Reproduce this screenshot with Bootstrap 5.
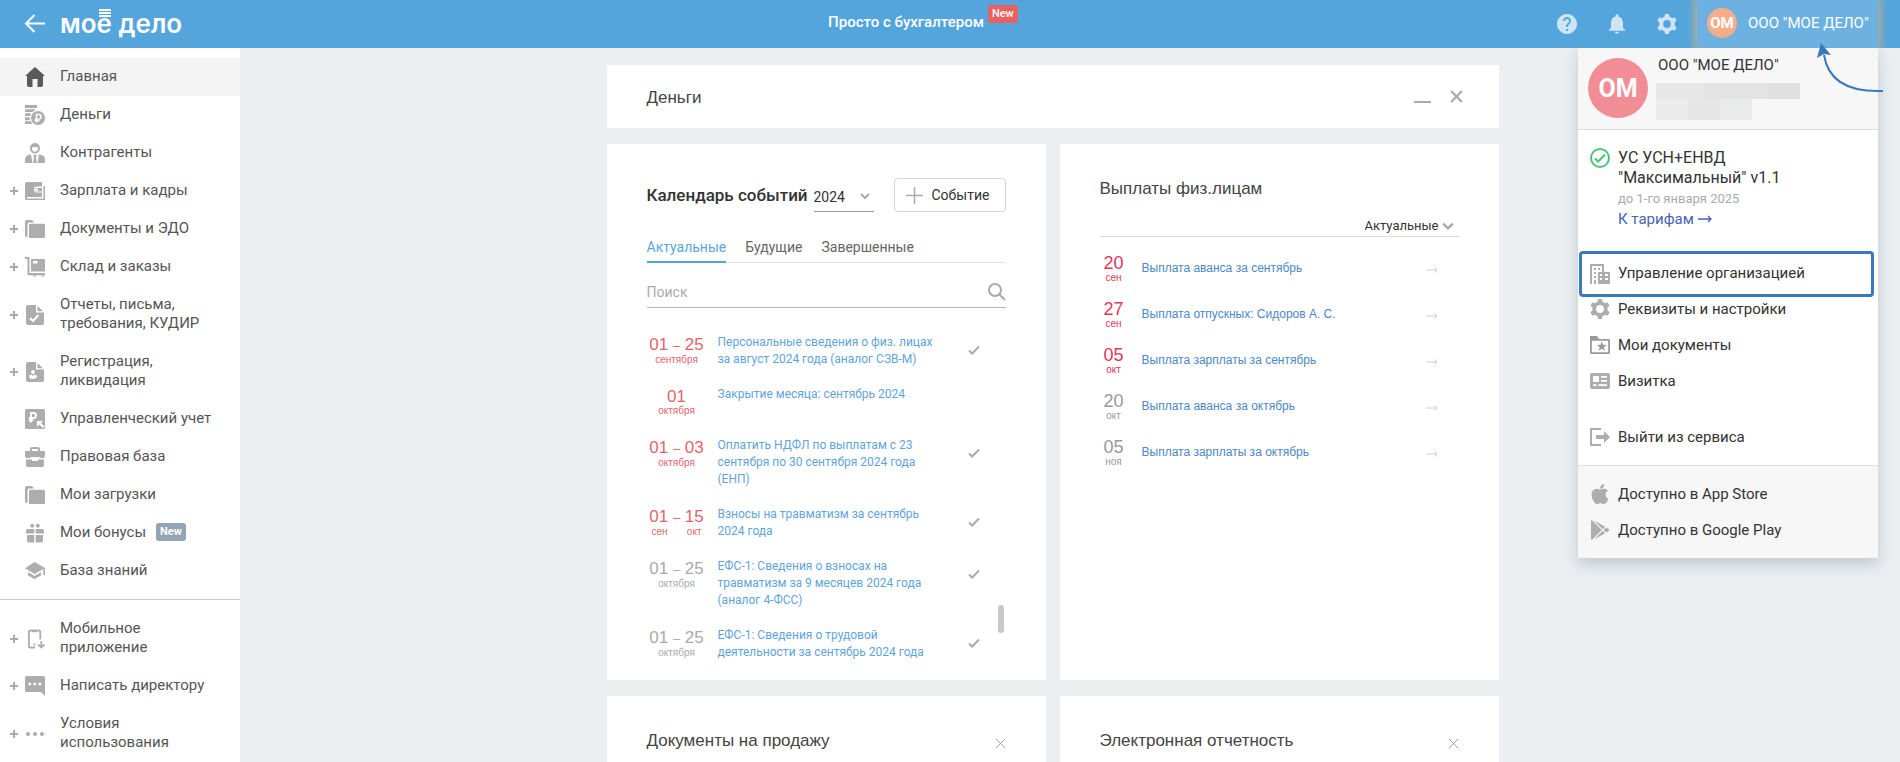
<!DOCTYPE html>
<html lang="ru">
<head>
<meta charset="utf-8">
<meta name="viewport" content="width=device-width, initial-scale=1">
<title>Моё дело — Главная</title>
<link href="https://cdn.jsdelivr.net/npm/bootstrap@5.3.0/dist/css/bootstrap.min.css" rel="stylesheet">
<style>
  body { font-family: Roboto, "Liberation Sans", sans-serif; font-size: 15px; line-height: 19px; color: #333; background: #ebeff2; }
  a { text-decoration: none; }
  svg { display: block; flex: none; }
  .ico { width: 20px; height: 20px; fill: #adadad; }

  /* top bar */
  .topbar { height: 48px; background: #53a5dc; color: #fff; padding: 0 22px 0 24px; z-index: 5; }
  .bar-side { flex: 1 1 0; display: flex; align-items: center; }
  .brand { font: 600 26px/46px Inter, sans-serif; color: #fff; margin-left: 14px; }
  .brand-yo { position: relative; display: inline-block; line-height: 30px; }
  .brand-yo::before { content: ""; position: absolute; left: 2px; top: 0; width: 12px; height: 8px;
    background: repeating-linear-gradient(#fff 0 2px, transparent 2px 3px); }
  .promo { color: #fff; font-weight: 500; font-size: 15px; margin-right: 90px; }
  .promo .tag-new { position: absolute; left: 100%; top: -8px; margin-left: 4px; }
  .tag-new { font-size: 11px; line-height: 18px; font-weight: 500; color: #fff; background: #e8605f; border-radius: 3px; padding: 0 4px; height: 18px; }
  .tag-side { background: #93a4b5; margin-left: 10px; font-weight: 700; }
  .topbar .ico { fill: #cfe5f5; }
  .icon-btn { border: 0; background: none; padding: 0; }
  .user-wrap { height: 48px; overflow: hidden; padding: 0 12px; margin-right: -12px; }
  .user-btn { height: 48px; width: 181px; border: 0; background: #6cb1e0; color: #fff; padding: 0 0 2px 10px; gap: 11px; box-shadow: 0 0 9px 1px #e0b070; white-space: nowrap; }
  .ava { border-radius: 50%; color: #fff; font-weight: 700; flex: none; display: flex; align-items: center; justify-content: center; }
  .ava-s { width: 30px; height: 30px; background: #f3ae89; font-size: 15px; }
  .ava-l { width: 60px; height: 60px; background: #f18e95; font-size: 25px; }

  /* sidebar */
  .side { width: 240px; flex: none; background: #fff; padding-top: 10px; }
  .side a { display: flex; align-items: center; min-height: 38px; padding: 0 10px 2px; color: #555; }
  .side a.two { min-height: 57px; }
  .side a.on { background: #f4f4f4; }
  .side a.on .ico { fill: #5a5a5a; }
  .side .ico { margin-right: 15px; }
  .side .ico, .side .plus { margin-top: 2px; }
  .plus { flex: none; width: 8px; height: 8px; margin-right: 7px; background: linear-gradient(#aaa, #aaa) center/8px 2px no-repeat, linear-gradient(#aaa, #aaa) center/2px 8px no-repeat; }
  .plus.none { background: none; }
  .side hr { margin: 9px 0 10px; border: 0; height: 1px; background: #ccc; opacity: 1; }

  /* widgets */
  .board { padding: 17px 35px 0 0; }
  .board-in { max-width: 892px; margin: 0 auto; display: grid; grid-template-columns: 1fr 1fr; gap: 16px 14px; }
  .widget { background: #fff; padding: 0 40px; }
  .widget h2 { font: 400 17px/22px "Liberation Sans", sans-serif; color: #444; margin: 0; }
  .money { grid-column: 1 / -1; height: 63px; padding-right: 36px; }
  .money h2 { padding-top: 2px; }
  .calendar, .payouts { height: 536px; }
  .teaser { min-height: 300px; padding-top: 34px; }
  .calendar h2 { font: 500 17px/22px Roboto, sans-serif; color: #333; padding-top: 6px; }
  .cal-head { padding-top: 34px; height: 68px; }
  .pick { appearance: none; border: 0; border-radius: 0; color: #333; background: transparent no-repeat right 4px center/10px 10px
    url("data:image/svg+xml,%3Csvg xmlns='http://www.w3.org/2000/svg' viewBox='0 0 10 10'%3E%3Cpath d='M1 3l4 4 4-4' fill='none' stroke='%23aaa' stroke-width='2'/%3E%3C/svg%3E"); }
  .pick-year { width: 60px; height: 32px; margin-top: 2px; border-bottom: 1px solid #999; font-size: 14px; padding: 3px 0 0; }
  .pick-state { width: 96px; height: 25px; font-size: 13px; padding: 2px 0 0 2px; background-size: 12px 12px; background-position: right 5px top 8px; }
  .btn-event { width: 112px; height: 34px; border: 1px solid #d5d5d5; border-radius: 4px; background: #fff; font-size: 14px; color: #333; gap: 9px; padding: 0 0 0 11px; }
  .tabs { margin-top: 25px; height: 26px; border-bottom: 1px solid #e3e3e3; gap: 19px; }
  .tabs button { border: 0; background: none; padding: 0 0 6px; font-size: 14px; line-height: 20px; height: 26px; color: #666; }
  .tabs button.on { color: #5aa6dc; border-bottom: 2px solid #53a5dc; padding-bottom: 4px; }
  .find { margin-top: 14px; height: 31px; border-bottom: 1px solid #b5b5b5; }
  .find input { border: 0; outline: 0; font-size: 14px; padding: 0; min-width: 0; color: #333; background: none; }
  .find input::placeholder { color: #aaa; opacity: 1; }
  .events { margin-top: 26px; position: relative; padding: 0; list-style: none; }
  .events li { display: flex; font-size: 12px; line-height: 17px; margin-bottom: 18px; }
  .events .when { width: 60px; margin-right: 11px; text-align: center; font-family: "Liberation Sans", sans-serif; color: #e8636a; min-height: 33px; padding-top: 1px; }
  .events .when b { display: block; font-weight: 400; font-size: 17px; line-height: 19px; }
  .events .when i { font-style: normal; font-size: 13px; }
  .events .when span { display: block; font-size: 10px; line-height: 10px; }
  .events .when span.pair { display: flex; justify-content: space-between; padding: 0 5px; }
  .events .later .when, .pays .later .when { color: #aaa; }
  .events a { color: #5fa4db; width: 226px; }
  .events .done { border: 0; background: none; padding: 0; height: 32px; margin-left: 24px; }
  .thumb { position: absolute; right: 2px; bottom: 10px; width: 6px; height: 28px; border-radius: 3px; background: #c8c8c8; }
  .payouts h2 { padding-top: 34px; height: 68px; }
  .pays { margin: 8px 0 0; padding: 0 21px 0 0; list-style: none; }
  .pays li { display: flex; align-items: center; height: 46px; }
  .pays li svg { margin-top: 4px; }
  .pays .when { width: 28px; margin-right: 14px; text-align: center; font: 10px/11px "Liberation Sans", sans-serif; color: #e53559; }
  .pays .when b { display: block; font-weight: 400; font-size: 18px; line-height: 18px; }
  .pays .later .when { color: #999; }
  .pays a { font: 12px/16px "Liberation Sans", sans-serif; color: #4b88c5; }
  .filter-row { border-bottom: 1px solid #ddd; height: 25px; }

  /* account menu */
  .account { position: absolute; top: 48px; right: 22px; width: 300px; background: #fff; box-shadow: 0 6px 14px rgba(60, 80, 100, .25); color: #333; z-index: 4; }
  .acc-head { background: #f7f7f7; border-bottom: 1px solid #ddd; height: 82px; padding: 10px 10px 0; gap: 8px; }
  .acc-head strong { font-weight: 400; line-height: 14px; display: block; padding: 0 0 11px 2px; }
  .blur-a { width: 144px; height: 16px; background: linear-gradient(90deg, #e7e7e7 33%, #e3e3e3 33% 78%, #e0e0e0 78%); }
  .blur-b { width: 96px; height: 21px; background: linear-gradient(90deg, #ebebeb 33%, #e6e6e6 33% 67%, #e9eaea 67%); }
  .plan { padding: 18px 12px 0; gap: 8px; height: 121px; }
  .plan h3 { font-size: 16px; line-height: 20px; font-weight: 400; margin: 0; }
  .plan small { font-size: 13px; line-height: 22px; color: #aaa; display: block; }
  .plan a { color: #4663b4; line-height: 18px; display: flex; align-items: center; gap: 4px; }
  .acc-list a { display: flex; align-items: center; gap: 8px; height: 36px; padding: 0 12px; color: #333; }
  .acc-list a.picked { height: 46px; margin: 0 4px 0 1px; padding: 0 8px 1px; border: 3px solid #3b79bd; border-radius: 4px; }
  .acc-list a.picked + a { margin-top: -6px; }
  .acc-list a.exit { margin: 20px 0 10px; }
  .acc-foot { background: #f7f7f7; border-top: 1px solid #ddd; padding: 10px 0; }
  .pointer { position: absolute; right: 16px; top: 40px; z-index: 6; pointer-events: none; }
</style>
</head>
<body class="vh-100 overflow-hidden">
<svg class="d-none" xmlns="http://www.w3.org/2000/svg">
  <symbol id="i-gear" viewBox="0 0 20 20"><circle cx="10" cy="10" r="5.8" fill="none" stroke="currentColor" stroke-width="3.8"/><g fill="currentColor"><path id="tooth" d="M8 0h4l.6 4H7.400zM8 20h4l.6-4H7.400z"/><use href="#tooth" transform="rotate(60 10 10)"/><use href="#tooth" transform="rotate(120 10 10)"/></g></symbol>
  <symbol id="i-folder" viewBox="0 0 20 20"><path d="M0 2.500Q0 1 1.500 1H7l2 2.500H4Q2.500 3.500 2.500 5.500V18Q0 18 0 16.500zM4 6.500Q4 4.800 5.500 4.800H18.500Q20 4.800 20 6.300V17.500Q20 19 18.500 19H4z"/></symbol>
  <symbol id="i-doc" viewBox="0 0 20 20"><path d="M1 2Q1 0 3 0H11V7.500H19V18Q19 20 17 20H3Q1 20 1 18zM12.500 1L18 6.200H12.500z"/></symbol>
  <symbol id="i-x" viewBox="0 0 12 12"><path d="M1 1l10 10M11 1L1 11" fill="none" stroke="currentColor"/></symbol>
  <symbol id="i-check" viewBox="0 0 12 12"><path d="M1 6.500L4.200 9.500 11 2.500" fill="none" stroke="#aaa" stroke-width="2"/></symbol>
  <symbol id="i-go" viewBox="0 0 12 6"><path d="M0 3h11M8.500 .5L11 3 8.500 5.500" fill="none" stroke="#ccc"/></symbol>
</svg>

<header class="topbar d-flex align-items-center position-relative">
  <div class="bar-side">
    <a href="#" aria-label="Назад"><svg width="22" height="20" viewBox="0 0 22 20" fill="none" stroke="#fff" stroke-width="2"><path d="M21 9.500H2M10.500 1L2 9.500l8.500 8.500"/></svg></a>
    <a class="brand" href="#">мо<span class="brand-yo">е</span> дело</a>
  </div>
  <a class="promo position-relative pb-1" href="#">Просто с бухгалтером<span class="tag-new">New</span></a>
  <div class="bar-side justify-content-end">
    <div class="d-flex" style="gap:30px;margin-right:8px">
      <button class="icon-btn" aria-label="Помощь"><svg class="ico" viewBox="2 2 20 20"><path d="M12 2C6.480 2 2 6.480 2 12s4.480 10 10 10 10-4.480 10-10S17.520 2 12 2zm1 17h-2v-2h2v2zm2.070-7.750l-.9.92C13.450 12.900 13 13.500 13 15h-2v-.5c0-1.100.45-2.100 1.170-2.830l1.240-1.260c.37-.36.59-.86.59-1.410 0-1.100-.9-2-2-2s-2 .9-2 2H8c0-2.210 1.790-4 4-4s4 1.790 4 4c0 .88-.36 1.680-.93 2.250z"/></svg></button>
      <button class="icon-btn" aria-label="Уведомления"><svg class="ico" viewBox="2 2.300 20 20"><path d="M12 22c1.100 0 2-.9 2-2h-4c0 1.100.89 2 2 2zm6-6v-5c0-3.070-1.640-5.640-4.500-6.320V4c0-.83-.67-1.500-1.500-1.500s-1.500.67-1.500 1.500v.68C7.630 5.360 6 7.920 6 11v5l-2 2v1h16v-1l-2-2z"/></svg></button>
      <button class="icon-btn" aria-label="Настройки" style="color:#cfe5f5"><svg class="ico"><use href="#i-gear"/></svg></button>
    </div>
    <div class="user-wrap">
      <button class="user-btn d-flex align-items-center"><span class="ava ava-s">ОМ</span>ООО "МОЕ ДЕЛО"</button>
    </div>
  </div>
</header>

<div class="d-flex" style="height:calc(100vh - 48px)">
  <nav class="side">
    <a class="on" href="#"><i class="plus none"></i><svg class="ico" viewBox="0 0 20 20"><path d="M10 0L20 9H18V18Q18 20 16 20H12.500V12H7.500V20H4Q2 20 2 18V9H0z"/></svg>Главная</a>
    <a href="#"><i class="plus none"></i><svg class="ico" viewBox="0 0 20 20"><path d="M0 0h12v3H0zM0 4.200h11L7.500 7H0zM0 8.200h6L5 11H0zM0 12.200h4.800v3H0zM0 16.200h5.500L7.500 19H0z"/><circle cx="13" cy="13" r="7"/><path d="M11.500 17.500v-8h2.300a2.300 2.300 0 0 1 0 4.600H9.500M9.500 15.800h5" fill="none" stroke="#fff" stroke-width="1.400"/></svg>Деньги</a>
    <a href="#"><i class="plus none"></i><svg class="ico" viewBox="0 0 20 20"><path d="M10 0a5 5 0 0 1 5 5c0 3-2 5.500-5 5.500S5 8 5 5a5 5 0 0 1 5-5zM6.800 4.500C6.800 7 8 8.800 10 8.800s3.200-1.800 3.200-4.300q-3.200-1.200-6.400 0z" fill-rule="evenodd"/><path d="M0 20v-3.500Q0 13 3.500 12L6 11.200 7.500 20zM20 20v-3.500Q20 13 16.500 12L14 11.200 12.500 20zM8 12h4l-1 2 .8 6H8.200L9 14z"/></svg>Контрагенты</a>
    <a href="#"><i class="plus"></i><svg class="ico" viewBox="0 0 20 20"><path d="M1.500 1H17v4.500h-5.500Q9 5.500 9 8.500t2.500 3H17V16H2v1.500h16.500V5H20v14H1.500Q0 19 0 17.500v-15Q0 1 1.500 1z"/><path d="M10.500 7H17v3.500h-6.500z"/><circle cx="12" cy="8.700" r="1.300" fill="#fff"/></svg>Зарплата и кадры</a>
    <a href="#"><i class="plus"></i><svg class="ico"><use href="#i-folder"/></svg>Документы и ЭДО</a>
    <a href="#"><i class="plus"></i><svg class="ico" viewBox="0 0 20 20"><path d="M0 0h4.500v16H20v2.200H3.200A2 2 0 0 1 2.500 16V2H0zM6 2h14v12.500H6zM8 4v2.500h4.500V4zM8 18h3.500a1.700 1.700 0 0 1-3.500 0zM16 18h3.500a1.700 1.700 0 0 1-3.500 0z" fill-rule="evenodd"/></svg>Склад и заказы</a>
    <a class="two" href="#"><i class="plus"></i><svg class="ico" viewBox="0 0 20 20"><use href="#i-doc"/><path d="M5 13l3 3 5.500-6" fill="none" stroke="#fff" stroke-width="2"/></svg><span>Отчеты, письма,<br>требования, КУДИР</span></a>
    <a class="two" href="#"><i class="plus"></i><svg class="ico" viewBox="0 0 20 20"><use href="#i-doc"/><circle cx="8" cy="10" r="1.900" fill="#fff"/><path d="M4 13.500l2.800-.8L8 14l1.200-1.300 2.800.8v1.500q-1 2-4 2t-4-2z" fill="#fff"/></svg><span>Регистрация,<br>ликвидация</span></a>
    <a href="#"><i class="plus none"></i><svg class="ico" viewBox="0 0 20 20"><rect width="20" height="20" rx="1.500"/><path d="M6 13.500V4h2.500a2.500 2.500 0 0 1 0 5H3.800M3.800 11.200h4.500" fill="none" stroke="#fff" stroke-width="1.900"/><path d="M12 12h6l-2 2 3.500 3.500-1.500 1.500L14.500 15.500l-2.500 2.300z" fill="#fff"/></svg>Управленческий учет</a>
    <a href="#"><i class="plus none"></i><svg class="ico" viewBox="0 0 20 20"><path d="M5 4V2q0-2 2-2h6q2 0 2 2v2h5v5q0 2-2 2h-3.500V10h-9v1H2Q0 11 0 9V4zm2 0h6V2H7zM1 12.500h6V14h6v-1.500h6V18q0 2-2 2H3q-2 0-2-2z" fill-rule="evenodd"/></svg>Правовая база</a>
    <a href="#"><i class="plus none"></i><svg class="ico"><use href="#i-folder"/></svg>Мои загрузки</a>
    <a href="#"><i class="plus none"></i><svg class="ico" viewBox="0 0 20 20"><circle cx="7.200" cy="2.800" r="2"/><circle cx="12.800" cy="2.800" r="2"/><path d="M3 6h6.300v4.500H1V8q0-2 2-2zM10.700 6H17q2 0 2 2v2.500h-8.300zM2 12h7.300v7.500H4q-2 0-2-2zM10.700 12H18v5.500q0 2-2 2h-5.300z"/></svg>Мои бонусы<span class="tag-new tag-side">New</span></a>
    <a href="#"><i class="plus none"></i><svg class="ico" viewBox="0 0 20 20"><path d="M9.500 1L20 7v7h-1.700V8L9.500 13 0 7.200zM3 11l6.500 4 6.500-4v3.500L9.500 18 3 14.500z"/></svg>База знаний</a>
    <hr>
    <a class="two" href="#"><i class="plus"></i><svg class="ico" viewBox="0 0 20 20"><path d="M10 18.500H5.500q-1.600 0-1.600-1.600V3.100q0-1.600 1.600-1.600h8.200q1.600 0 1.600 1.600V10.500M16.300 12v6M13 15.500l3.300 3 3.300-3" fill="none" stroke="#adadad" stroke-width="1.800"/><path d="M7 1.500h5v1.800H7zM8.500 14.500h2v2h-2z"/></svg><span>Мобильное<br>приложение</span></a>
    <a href="#"><i class="plus"></i><svg class="ico" viewBox="0 0 20 20"><path d="M1.500 0h17Q20 0 20 1.500V20l-4-4H1.500Q0 16 0 14.500v-13Q0 0 1.500 0z"/><g fill="#fff"><circle cx="4.800" cy="8" r="1.500"/><circle cx="9.800" cy="8" r="1.500"/><circle cx="14.800" cy="8" r="1.500"/></g></svg>Написать директору</a>
    <a class="two" href="#"><i class="plus"></i><svg class="ico" viewBox="0 0 20 20"><circle cx="3" cy="10" r="2"/><circle cx="10" cy="10" r="2"/><circle cx="17" cy="10" r="2"/></svg><span>Условия<br>использования</span></a>
  </nav>

  <main class="board flex-fill overflow-hidden">
    <div class="board-in">
      <section class="widget money d-flex align-items-center">
        <h2 class="flex-fill">Деньги</h2>
        <button class="icon-btn" aria-label="Свернуть"><svg width="17" height="12"><path d="M0 11h17" stroke="#aaa" stroke-width="2"/></svg></button>
        <button class="icon-btn" aria-label="Закрыть" style="margin-left:19px;color:#aaa"><svg width="13" height="13" stroke-width="2"><use href="#i-x"/></svg></button>
      </section>

      <section class="widget calendar">
        <div class="cal-head d-flex">
          <h2>Календарь событий</h2>
          <select class="pick pick-year ms-auto" aria-label="Год"><option>2024</option></select>
          <button class="btn-event d-flex align-items-center" style="margin-left:20px"><svg width="17" height="17"><path d="M8.500 0v17M0 8.500h17" stroke="#aaa" stroke-width="1.500"/></svg>Событие</button>
        </div>
        <div class="tabs d-flex"><button class="on">Актуальные</button><button>Будущие</button><button>Завершенные</button></div>
        <div class="find d-flex align-items-center">
          <input class="flex-fill" id="q" type="search" placeholder="Поиск" aria-label="Поиск">
          <label for="q"><svg width="18" height="18" fill="none" stroke="#aaa" stroke-width="2"><circle cx="7" cy="7" r="6"/><path d="M11.300 11.300L17 17"/></svg></label>
        </div>
        <ul class="events">
          <li><div class="when"><b>01 <i>–</i> 25</b><span>сентября</span></div><a href="#">Персональные сведения о физ. лицах за август 2024 года (аналог СЗВ-М)</a><button class="done" aria-label="Выполнено"><svg width="12" height="12"><use href="#i-check"/></svg></button></li>
          <li><div class="when"><b>01</b><span>октября</span></div><a href="#">Закрытие месяца: сентябрь 2024</a></li>
          <li><div class="when"><b>01 <i>–</i> 03</b><span>октября</span></div><a href="#">Оплатить НДФЛ по выплатам с 23 сентября по 30 сентября 2024 года (ЕНП)</a><button class="done" aria-label="Выполнено"><svg width="12" height="12"><use href="#i-check"/></svg></button></li>
          <li><div class="when"><b>01 <i>–</i> 15</b><span class="pair"><span>сен</span><span>окт</span></span></div><a href="#">Взносы на травматизм за сентябрь 2024 года</a><button class="done" aria-label="Выполнено"><svg width="12" height="12"><use href="#i-check"/></svg></button></li>
          <li class="later"><div class="when"><b>01 <i>–</i> 25</b><span>октября</span></div><a href="#">ЕФС-1: Сведения о взносах на травматизм за 9 месяцев 2024 года (аналог 4-ФСС)</a><button class="done" aria-label="Выполнено"><svg width="12" height="12"><use href="#i-check"/></svg></button></li>
          <li class="later"><div class="when"><b>01 <i>–</i> 25</b><span>октября</span></div><a href="#">ЕФС-1: Сведения о трудовой деятельности за сентябрь 2024 года</a><button class="done" aria-label="Выполнено"><svg width="12" height="12"><use href="#i-check"/></svg></button></li>
          <li class="thumb" aria-hidden="true"></li>
        </ul>
      </section>

      <section class="widget payouts">
        <h2>Выплаты физ.лицам</h2>
        <div class="filter-row d-flex justify-content-end"><select class="pick pick-state" aria-label="Период"><option>Актуальные</option></select></div>
        <ul class="pays">
          <li><div class="when"><b>20</b>сен</div><a class="flex-fill" href="#">Выплата аванса за сентябрь</a><svg width="12" height="6"><use href="#i-go"/></svg></li>
          <li><div class="when"><b>27</b>сен</div><a class="flex-fill" href="#">Выплата отпускных: Сидоров А. С.</a><svg width="12" height="6"><use href="#i-go"/></svg></li>
          <li><div class="when"><b>05</b>окт</div><a class="flex-fill" href="#">Выплата зарплаты за сентябрь</a><svg width="12" height="6"><use href="#i-go"/></svg></li>
          <li class="later"><div class="when"><b>20</b>окт</div><a class="flex-fill" href="#">Выплата аванса за октябрь</a><svg width="12" height="6"><use href="#i-go"/></svg></li>
          <li class="later"><div class="when"><b>05</b>ноя</div><a class="flex-fill" href="#">Выплата зарплаты за октябрь</a><svg width="12" height="6"><use href="#i-go"/></svg></li>
        </ul>
      </section>

      <section class="widget teaser d-flex align-items-start">
        <h2 class="flex-fill">Документы на продажу</h2>
        <button class="icon-btn pt-2" aria-label="Закрыть" style="color:#999"><svg width="11" height="11"><use href="#i-x"/></svg></button>
      </section>
      <section class="widget teaser d-flex align-items-start">
        <h2 class="flex-fill">Электронная отчетность</h2>
        <button class="icon-btn pt-2" aria-label="Закрыть" style="color:#999"><svg width="11" height="11"><use href="#i-x"/></svg></button>
      </section>
    </div>
  </main>
</div>

<aside class="account">
  <div class="acc-head d-flex">
    <span class="ava ava-l">ОМ</span>
    <div><strong>ООО "МОЕ ДЕЛО"</strong><div class="blur-a"></div><div class="blur-b"></div></div>
  </div>
  <div class="plan d-flex">
    <svg width="20" height="20" fill="none" stroke="#4fc27c" stroke-width="2"><circle cx="10" cy="10" r="9"/><path d="M5 10.500l3.200 3L15 6.500"/></svg>
    <div><h3>УС УСН+ЕНВД<br>"Максимальный" v1.1</h3><small>до 1-го января 2025</small><a href="#">К тарифам <svg width="14" height="8" fill="none" stroke="#4663b4" stroke-width="1.300"><path d="M0 4h13M10 1l3 3-3 3"/></svg></a></div>
  </div>
  <div class="acc-list">
    <a class="picked" href="#"><svg class="ico" viewBox="0 0 20 20"><path d="M0 0h14v8h6v12H8v-4H6v4H4v-4H2v4H0zM2 2v14h6V8h4V2zM10 10v2h2v-2zm5 0v2h3v-2zM10 14v2h2v-2zm5 0v2h3v-2z" fill-rule="evenodd"/><path d="M4 4h2v2H4zM8 4h2v2H8zM4 8h2v2H4zM4 12h2v2H4z"/></svg>Управление организацией</a>
    <a href="#"><svg class="ico" color="#adadad"><use href="#i-gear"/></svg>Реквизиты и настройки</a>
    <a href="#"><svg class="ico" viewBox="0 0 20 20" style="fill:#999"><path d="M0 1h7l2 3h9.500Q20 4 20 5.500v12Q20 19 18.500 19h-17Q0 19 0 17.500zM1.800 5.800v11.400h16.400V5.800z" fill-rule="evenodd"/><path d="M11.800 6.500l1.300 3.300 3.600.2-2.800 2.200 1 3.500-3.100-2-3.100 2 1-3.500L7 10l3.500-.2z"/></svg>Мои документы</a>
    <a href="#"><svg class="ico" viewBox="0 0 20 20"><path d="M2 2h16q2 0 2 2v12q0 2-2 2H2q-2 0-2-2V4q0-2 2-2zm1 3v6h6V5zm8 0v1.800h6V5zm0 4v1.800h6V9zM3 13.200V15h3.500v-1.800zm5.500 0V15H17v-1.800z" fill-rule="evenodd"/></svg>Визитка</a>
    <a class="exit" href="#"><svg class="ico" viewBox="0 0 20 20"><path d="M11 2H1v16h10" fill="none" stroke="#adadad" stroke-width="2"/><path d="M6 8h8V4l6 6-6 6v-4H6z"/></svg>Выйти из сервиса</a>
  </div>
  <div class="acc-list acc-foot">
    <a href="#"><svg class="ico" viewBox="0 32 384 448"><path d="M318.700 268.700c-.2-36.700 16.400-64.400 50-84.800-18.800-26.900-47.200-41.700-84.700-44.600-35.500-2.800-74.300 20.700-88.500 20.700-15 0-49.400-19.700-76.400-19.700C63.300 141.200 4 184.800 4 273.500q0 39.300 14.400 81.200c12.800 36.700 59 126.700 107.200 125.200 25.200-.6 43-17.900 75.800-17.900 31.800 0 48.300 17.900 76.400 17.900 48.600-.7 90.400-82.500 102.600-119.300-65.200-30.700-61.700-90-61.700-91.900zm-56.600-164.200c27.300-32.400 24.800-61.900 24-72.500-24.100 1.400-52 16.400-67.900 34.900-17.500 19.800-27.800 44.300-25.600 71.900 26.100 2 49.900-11.400 69.500-34.300z"/></svg>Доступно в App Store</a>
    <a href="#"><svg class="ico" viewBox="0 0 512 512"><path d="M325.300 234.300L104.600 13l280.800 161.200-60.100 60.100zM47 0C34 6.800 25.300 19.200 25.300 35.300v441.300c0 16.100 8.700 28.500 21.700 35.300l256.600-256L47 0zm425.200 225.600l-58.900-34.100-65.700 64.500 65.700 64.500 60.100-34.100c18-14.300 18-46.500-1.200-60.800zM104.600 499l280.800-161.200-60.100-60.100L104.600 499z"/></svg>Доступно в Google Play</a>
  </div>
</aside>
<svg class="pointer" width="68" height="56" viewBox="0 0 68 56" aria-hidden="true"><path d="M67 51Q14 53 8 15" fill="none" stroke="#3b79bd" stroke-width="2"/><path d="M5 3L1 18l7-4 7 1z" fill="#3b79bd"/></svg>
<script src="https://cdn.jsdelivr.net/npm/bootstrap@5.3.0/dist/js/bootstrap.bundle.min.js"></script>
</body>
</html>
